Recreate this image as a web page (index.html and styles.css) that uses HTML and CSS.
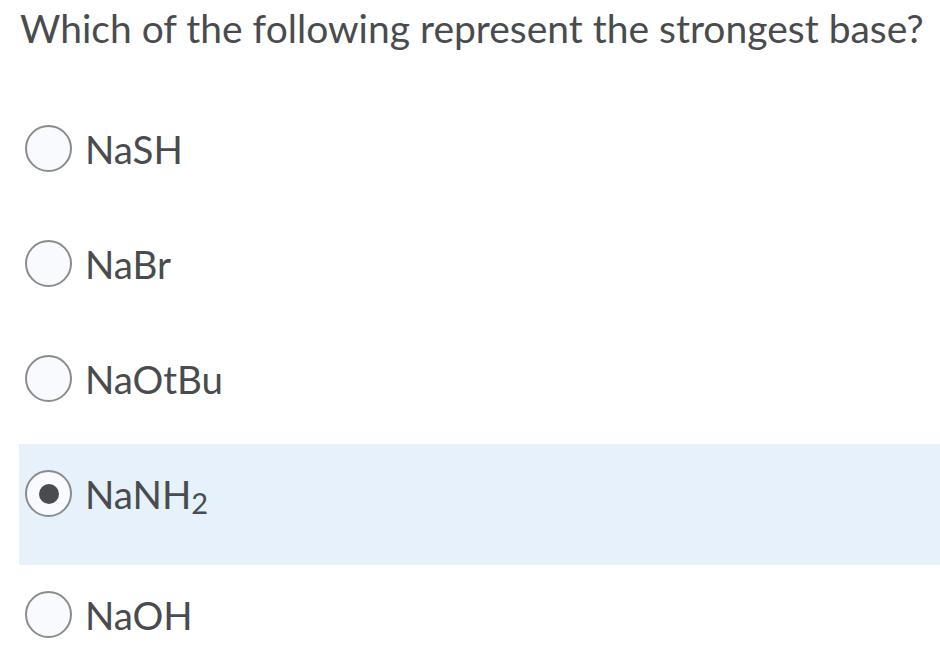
FILE: index.html
```html
<!DOCTYPE html>
<html lang="en">
<head>
<meta charset="utf-8">
<title>Question</title>
<link rel="stylesheet" href="styles.css">
</head>
<body>
<div class="question">
  <h1 class="prompt">Which of the following represent the strongest base?</h1>
  <div class="options">
    <label class="option">
      <span class="radio"></span>
      <span class="answer">NaSH</span>
    </label>
    <label class="option">
      <span class="radio"></span>
      <span class="answer">NaBr</span>
    </label>
    <label class="option">
      <span class="radio"></span>
      <span class="answer">NaOtBu</span>
    </label>
    <label class="option selected">
      <span class="radio checked"></span>
      <span class="answer">NaNH<sub class="sub">2</sub></span>
    </label>
    <label class="option">
      <span class="radio"></span>
      <span class="answer">NaOH</span>
    </label>
  </div>
</div>
</body>
</html>
```

FILE: styles.css
```css
html, body {
  margin: 0;
  padding: 0;
  background: #ffffff;
}

body {
  font-family: Lato, "Open Sans", "Liberation Sans", sans-serif;
  color: #494c4e;
  width: 940px;
  height: 666px;
  overflow: hidden;
}

.question {
  padding-left: 19px;
}

.prompt {
  margin: 0;
  padding-top: 5px;
  padding-left: 1px;
  font-size: 39px;
  line-height: 47px;
  font-weight: 400;
  white-space: nowrap;
}

.options {
  margin-top: 47px;
  display: flex;
  flex-direction: column;
}

.option {
  display: flex;
  align-items: center;
  gap: 13px;
  padding: 26px 0 42px 6px;
  height: 47px;
  box-sizing: content-box;
}

.option.selected {
  background: #e6f1fb;
  padding-bottom: 48px;
}

.radio {
  flex: none;
  width: 47px;
  height: 47px;
  box-sizing: border-box;
  border: 2px solid #898c8f;
  border-radius: 50%;
  background: #f9fafe;
  display: flex;
  align-items: center;
  justify-content: center;
}

.radio.checked::after {
  content: "";
  width: 20px;
  height: 20px;
  border-radius: 50%;
  background: #494c4e;
}

.answer {
  font-size: 38.5px;
  line-height: 47px;
  padding-top: 1px;
}

.sub {
  font-size: 29px;
  vertical-align: -5px;
  line-height: 0;
}
```
